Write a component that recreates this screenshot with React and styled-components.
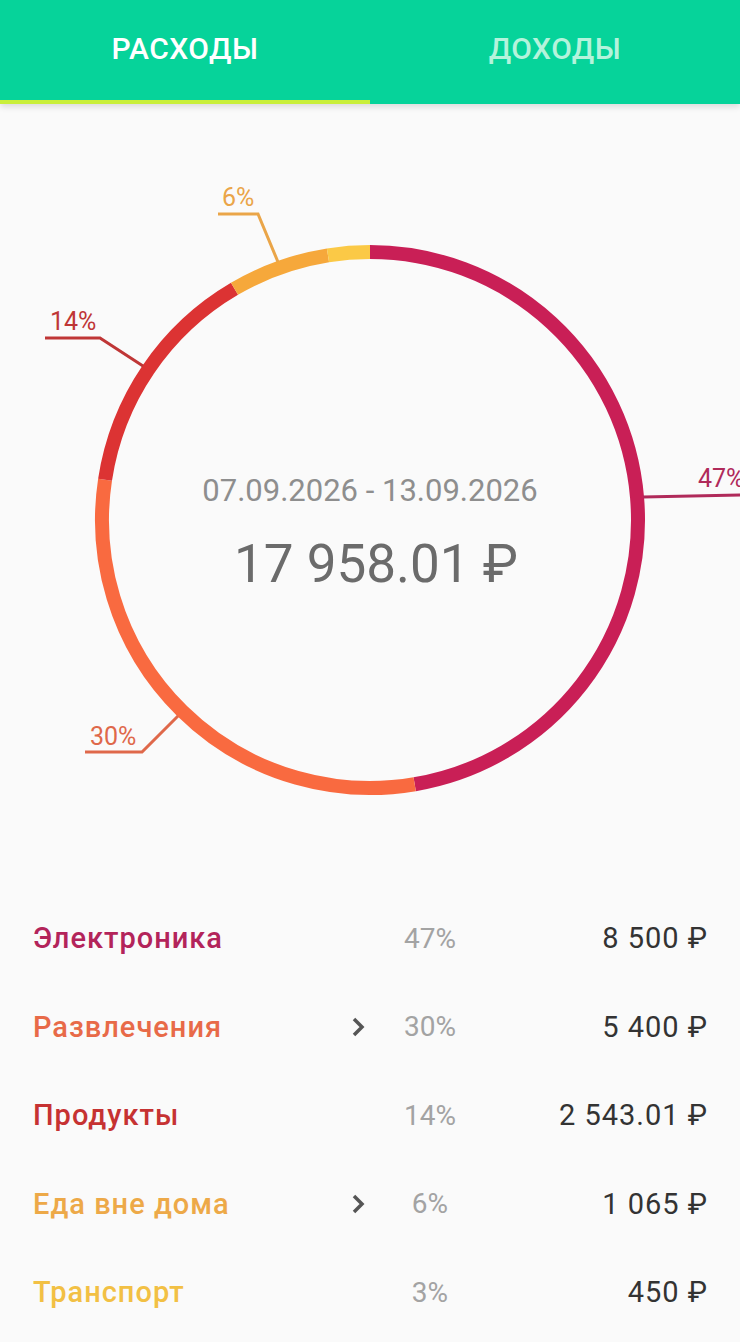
import React, { useState } from "react";
import styled, { createGlobalStyle } from "styled-components";

const GlobalStyle = createGlobalStyle`
  html, body {
    margin: 0;
    padding: 0;
    background: #fafafa;
    font-family: Roboto, "Noto Sans", sans-serif;
  }
`;

const categories = [
  { name: "Электроника", amount: 8500, label: "8 500 ₽", ring: "#c91f56", text: "#b3245a", tag: "#b02a5a", more: false },
  { name: "Развлечения", amount: 5400, label: "5 400 ₽", ring: "#f96a40", text: "#e86a48", tag: "#df684a", more: true },
  { name: "Продукты", amount: 2543.01, label: "2 543.01 ₽", ring: "#dc3333", text: "#c63232", tag: "#bf3636", more: false },
  { name: "Еда вне дома", amount: 1065, label: "1 065 ₽", ring: "#f6a83b", text: "#eda948", tag: "#eaa548", more: true },
  { name: "Транспорт", amount: 450, label: "450 ₽", ring: "#fbc946", text: "#f2c044", tag: "#f2c044", more: false },
];

const total = categories.reduce((s, c) => s + c.amount, 0);

const Page = styled.div`
  width: 740px;
  min-height: 1342px;
  background: #fafafa;
  overflow: hidden;
`;

const TabBar = styled.div`
  position: relative;
  display: flex;
  height: 104px;
  background: #06d39a;
  box-shadow: 0 3px 6px rgba(0, 0, 0, 0.12);
`;

const Tab = styled.button`
  flex: 1;
  border: none;
  background: transparent;
  padding: 0 0 8px;
  font-family: Roboto, sans-serif;
  font-size: 30px;
  font-weight: 500;
  letter-spacing: 0.5px;
  color: ${(p) => (p.$active ? "#ffffff" : "#b4f3dc")};
  cursor: pointer;
`;

const Indicator = styled.div`
  position: absolute;
  left: ${(p) => (p.$index === 0 ? "0" : "50%")};
  bottom: 0;
  width: 50%;
  height: 4px;
  background: #c9ef3b;
`;

const ChartWrap = styled.div`
  position: relative;
  height: 790px;
`;

const Center = styled.div`
  position: absolute;
  left: 0;
  right: 0;
  top: 416px;
  transform: translateY(-50%);
  display: flex;
  flex-direction: column;
  align-items: center;
  gap: 24px;
  margin-top: 13px;
`;

const Period = styled.div`
  font-size: 31px;
  color: #8e8e8e;
`;

const Total = styled.div`
  font-size: 53px;
  color: #6b6b6b;
  margin-left: 12px;
`;

const List = styled.div`
  display: flex;
  flex-direction: column;
`;

const Row = styled.div`
  display: grid;
  grid-template-columns: 1fr 37px 90px 233px;
  align-items: center;
  height: 88.5px;
  padding: 0 32px 0 33px;
`;

const Name = styled.div`
  font-size: 29px;
  font-weight: 500;
  letter-spacing: 1px;
  color: ${(p) => p.$color};
`;

const Chevron = styled.svg`
  width: 16px;
  height: 24px;
  justify-self: start;
  margin-left: 2px;
`;

const Percent = styled.div`
  font-size: 28px;
  color: #a3a3a3;
  text-align: center;
`;

const Amount = styled.div`
  font-size: 29px;
  letter-spacing: 1px;
  color: #333333;
  text-align: right;
`;

function Donut() {
  const cx = 370;
  const cy = 416;
  const r = 268;
  let acc = 0;
  const pt = (deg, rad) => {
    const a = (deg * Math.PI) / 180;
    return [cx + rad * Math.sin(a), cy - rad * Math.cos(a)];
  };
  const arcs = categories.map((c) => {
    const start = (acc / total) * 360;
    acc += c.amount;
    const end = (acc / total) * 360;
    const [x1, y1] = pt(start, r);
    const [x2, y2] = pt(end, r);
    const large = end - start > 180 ? 1 : 0;
    return { ...c, d: `M ${x1} ${y1} A ${r} ${r} 0 ${large} 1 ${x2} ${y2}` };
  });

  // leader lines from each slice to its share label
  const tags = [
    { i: 0, d: "M 643 393 L 740 391", tx: 698, ty: 383, text: "47%" },
    { i: 1, d: "M 178 612 L 142 648 L 85 648", tx: 90, ty: 641, text: "30%" },
    { i: 2, d: "M 143 262 L 100 234 L 45 234", tx: 50, ty: 226, text: "14%" },
    { i: 3, d: "M 278 158 L 258 110 L 218 110", tx: 222, ty: 102, text: "6%" },
  ];

  return (
    <svg width="740" height="790" viewBox="0 0 740 790">
      {arcs.map((a) => (
        <path key={a.name} d={a.d} fill="none" stroke={a.ring} strokeWidth="14" />
      ))}
      {tags.map((t) => (
        <g key={t.text}>
          <path d={t.d} fill="none" stroke={categories[t.i].tag} strokeWidth="3" />
          <text x={t.tx} y={t.ty} fontFamily="Roboto, sans-serif" fontSize="25" fill={categories[t.i].tag}>
            {t.text}
          </text>
        </g>
      ))}
    </svg>
  );
}

export default function App() {
  const [tab, setTab] = useState(0);
  return (
    <Page>
      <GlobalStyle />
      <TabBar>
        <Tab $active={tab === 0} onClick={() => setTab(0)}>РАСХОДЫ</Tab>
        <Tab $active={tab === 1} onClick={() => setTab(1)}>ДОХОДЫ</Tab>
        <Indicator $index={tab} />
      </TabBar>
      <ChartWrap>
        <Donut />
        <Center>
          <Period>07.09.2026 - 13.09.2026</Period>
          <Total>17 958.01 ₽</Total>
        </Center>
      </ChartWrap>
      <List>
        {categories.map((c) => (
          <Row key={c.name}>
            <Name $color={c.text}>{c.name}</Name>
            {c.more ? (
              <Chevron viewBox="0 0 16 24">
                <polyline points="4,4 12,12 4,20" fill="none" stroke="#555" strokeWidth="3.5" />
              </Chevron>
            ) : (
              <span />
            )}
            <Percent>{Math.round((c.amount / total) * 100)}%</Percent>
            <Amount>{c.label}</Amount>
          </Row>
        ))}
      </List>
    </Page>
  );
}
